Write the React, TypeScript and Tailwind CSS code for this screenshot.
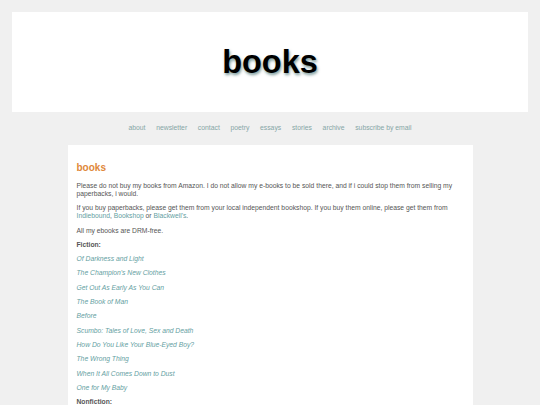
import React from 'react';

const navLinks = ['about', 'newsletter', 'contact', 'poetry', 'essays', 'stories', 'archive', 'subscribe by email'];

const fiction = [
  'Of Darkness and Light',
  "The Champion's New Clothes",
  'Get Out As Early As You Can',
  'The Book of Man',
  'Before',
  'Scumbo: Tales of Love, Sex and Death',
  'How Do You Like Your Blue-Eyed Boy?',
  'The Wrong Thing',
  'When It All Comes Down to Dust',
  'One for My Baby',
];

const App: React.FC = () => {
  return (
    <div className="min-h-[405px] bg-[#f0f0f0] font-['Liberation_Sans',Arial,sans-serif] pt-[12px] px-[12px]">
      {/* Banner */}
      <header className="bg-white h-[100px] flex items-center justify-center">
        <h1 className="text-[32.5px] font-bold text-black leading-none [text-shadow:1px_2px_3px_rgba(40,90,90,0.6)]">books</h1>
      </header>

      <nav className="h-[33px] flex items-center justify-center gap-[10.7px] text-[6.8px] text-[#86a6a6]">
        {navLinks.map((l) => (
          <a key={l} href="#" className="hover:underline">{l}</a>
        ))}
      </nav>

      <main className="mx-auto w-[405px] bg-white px-[9px] pt-[17px] pb-4 text-[6.75px] leading-[8px] text-[#555]">
        <h2 className="text-[10px] font-bold text-[#e0883a] leading-[12px] mb-[8px]">books</h2>
        <p className="mb-[6.3px]">
          Please do not buy my books from Amazon. I do not allow my e-books to be sold there, and if i could stop them from selling my paperbacks, i would.
        </p>
        <p className="mb-[6.3px]">
          If you buy paperbacks, please get them from your local independent bookshop. If you buy them online, please get them from{' '}
          <a href="#" className="text-[#64a0a2]">Indiebound</a>, <a href="#" className="text-[#64a0a2]">Bookshop</a> or{' '}
          <a href="#" className="text-[#64a0a2]">Blackwell's</a>.
        </p>
        <p className="mb-[6.3px]">All my ebooks are DRM-free.</p>
        <p className="mb-[6.3px] font-bold">Fiction:</p>
        {fiction.map((t) => (
          <p key={t} className="mb-[6.3px]">
            <a href="#" className="italic text-[#64a0a2]">{t}</a>
          </p>
        ))}
        <p className="mb-[6.3px] font-bold">Nonfiction:</p>
      </main>
    </div>
  );
};

export default App;
